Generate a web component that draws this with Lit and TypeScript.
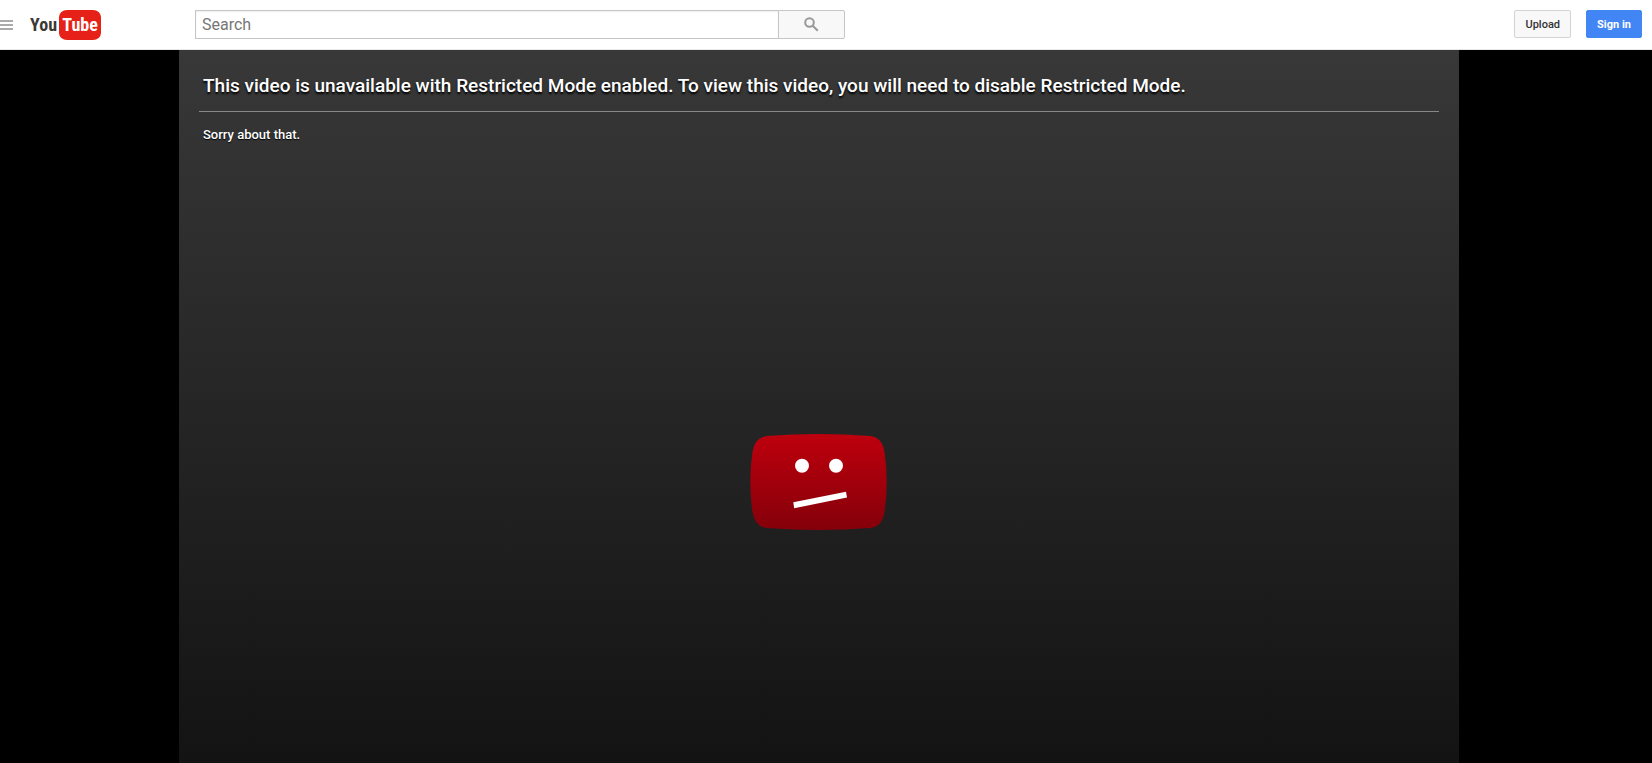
import { LitElement, html, css } from "lit";
import { customElement } from "lit/decorators.js";

@customElement("site-logo")
class SiteLogo extends LitElement {
  static styles = css`
    :host { display: block; }
    .logo {
      display: flex;
      align-items: center;
      gap: 2px;
      height: 30px;
      font: 700 18px/30px "Roboto Condensed", "Liberation Sans Narrow", "Open Sans Condensed", sans-serif;
      color: #3a3936;
      text-decoration: none;
    }
    .tube {
      width: 42px;
      border-radius: 8px / 7px;
      background: #e62117;
      color: #fff;
      text-align: center;
    }
  `;
  render() {
    return html`<a class="logo" href="#" aria-label="YouTube"><span>You</span><span class="tube">Tube</span></a>`;
  }
}

@customElement("site-header")
class SiteHeader extends LitElement {
  static styles = css`
    :host { display: block; }
    * { box-sizing: border-box; }
    .bar {
      display: flex;
      align-items: flex-start;
      height: 50px;
      padding: 10px 10px 0 0;
      border-bottom: 1px solid #e8e8e8;
      background: #fff;
    }
    .start {
      display: flex;
      align-items: center;
      gap: 17px;
      flex: 0 0 195px;
    }
    .guide {
      width: 13px;
      height: 30px;
      padding: 0;
      border: 0;
      background: none;
    }
    .guide svg { display: block; }
    .search {
      display: flex;
      flex: 0 1 650px;
      height: 29px;
      margin: 0 auto 0 0;
    }
    .field {
      flex: 1;
      min-width: 0;
      padding: 0 6px;
      border: 1px solid #c6c6c6;
      border-right: 0;
      border-radius: 0;
      box-shadow: inset 0 1px 2px #eee;
      font: 16px/27px Roboto, sans-serif;
      color: #333;
    }
    .field::placeholder { color: #767676; opacity: 1; }
    .go {
      display: grid;
      place-items: center;
      width: 67px;
      padding: 0;
      border: 1px solid #c6c6c6;
      border-radius: 0 2px 2px 0;
      background: #f8f8f8;
    }
    .actions { display: flex; gap: 15px; }
    .button {
      height: 28px;
      padding: 1px 10px 0;
      border: 1px solid #d3d3d3;
      border-radius: 2px;
      background: #f8f8f8;
      font: 500 11px/25px Roboto, sans-serif;
      color: #333;
    }
    .primary {
      border-color: #4285f4;
      background: #4285f4;
      font-weight: 700;
      color: #fff;
    }
  `;
  render() {
    return html`
      <header class="bar">
        <div class="start">
          <button class="guide" aria-label="Guide">
            <svg width="13" height="30" viewBox="0 0 13 30" fill="#aaa">
              <path d="M0 10h13v2H0zM0 14h13v2H0zM0 18h13v2H0z" />
            </svg>
          </button>
          <site-logo></site-logo>
        </div>
        <form class="search" role="search" @submit=${(e: Event) => e.preventDefault()}>
          <input class="field" type="text" placeholder="Search" aria-label="Search" />
          <button class="go" aria-label="Search">
            <svg width="15" height="15" viewBox="0 0 15 15" fill="none" stroke="#999" stroke-width="2">
              <circle cx="5.5" cy="5.5" r="4.3" />
              <path d="M8.7 8.7L13.8 13.8" />
            </svg>
          </button>
        </form>
        <div class="actions">
          <button class="button">Upload</button>
          <button class="button primary">Sign in</button>
        </div>
      </header>
    `;
  }
}

@customElement("unavailable-player")
class UnavailablePlayer extends LitElement {
  static styles = css`
    :host {
      display: flex;
      justify-content: center;
      padding-right: 14px;
      background: #000;
    }
    .player {
      box-sizing: border-box;
      display: flex;
      flex-direction: column;
      width: 100%;
      max-width: 1280px;
      padding: 20px;
      background: linear-gradient(#383838, #131313);
      color: #fff;
      font-family: Roboto, sans-serif;
    }
    .title {
      margin: 0;
      padding: 0 4px 9px;
      border-bottom: 1px solid #888;
      font-size: 19px;
      line-height: 32px;
      font-weight: 500;
      text-shadow: 0 2px 2px #000;
    }
    .note {
      margin: 0;
      padding: 13px 4px;
      font-size: 13px;
      line-height: 20px;
      font-weight: 500;
      text-shadow: 0 1px 1px #000;
    }
    .stage {
      flex: 1;
      display: grid;
      place-items: center;
      padding-top: 62px;
    }
    .face { display: block; }
  `;
  render() {
    return html`
      <section class="player">
        <h1 class="title">This video is unavailable with Restricted Mode enabled. To view this video, you will need to disable Restricted Mode.</h1>
        <p class="note">Sorry about that.</p>
        <div class="stage">
          <svg class="face" width="138" height="96" viewBox="0 0 138 96" aria-hidden="true">
            <defs>
              <linearGradient id="red" x1="0" y1="0" x2="0" y2="1">
                <stop offset="0" stop-color="#be000d" />
                <stop offset="1" stop-color="#84000a" />
              </linearGradient>
            </defs>
            <path fill="url(#red)" d="M17 2Q68.500-2 120 2Q132 3 134.500 18Q139 48 134.500 78Q132 93 120 94Q68.500 98 17 94Q5 93 2.500 78Q-2 48 2.500 18Q5 3 17 2Z" />
            <circle cx="52" cy="31.700" r="7" fill="#fff" />
            <circle cx="86" cy="31.700" r="7" fill="#fff" />
            <path fill="#fff" d="M43.300 68.300L96 57.700L97 63.400L44.200 74.300Z" />
          </svg>
        </div>
      </section>
    `;
  }
}

@customElement("app-root")
class AppRoot extends LitElement {
  static styles = css`
    :host {
      display: flex;
      flex-direction: column;
      min-height: 100vh;
      background: #000;
    }
    .content { flex: 1; }
  `;
  render() {
    return html`
      <site-header></site-header>
      <unavailable-player class="content"></unavailable-player>
    `;
  }
}
